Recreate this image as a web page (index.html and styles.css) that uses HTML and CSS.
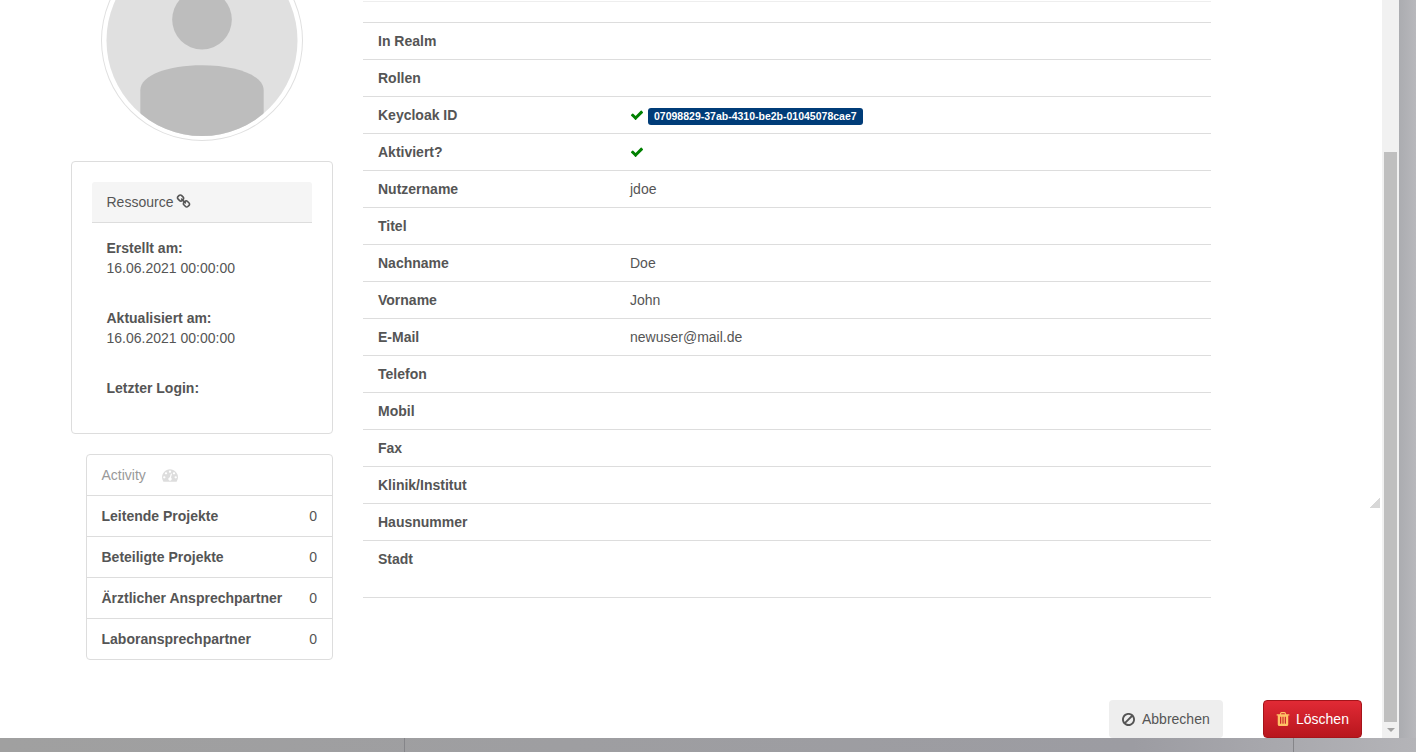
FILE: index.html
```html
<!DOCTYPE html>
<html lang="de">
<head>
    <meta charset="UTF-8">
    <title>Nutzer löschen</title>
    <link rel="stylesheet" href="styles.css">
</head>
<body>
    <div class="screen">
        <div class="screen-main">
            <div class="dialog">
                <div class="dialog-body">
                    <div class="side">
                        <div class="avatar">
                            <svg viewBox="0 0 192 192" width="192" height="191">
                                <defs>
                                    <clipPath id="avatarClip"><circle cx="96" cy="96" r="96"/></clipPath>
                                </defs>
                                <circle cx="96" cy="96" r="96" fill="#e0e0e0"/>
                                <circle cx="96" cy="75" r="30" fill="#bdbdbd"/>
                                <path clip-path="url(#avatarClip)" d="M34 200V146C34 131 62 121 96 121S158 131 158 146V200Z" fill="#bdbdbd"/>
                            </svg>
                        </div>

                        <div class="resource-card">
                            <div class="resource-head">
                                Ressource
                                <svg class="icon" viewBox="0 0 1792 1792" width="15" height="15"><path d="M1520 1216q0-40-28-68l-208-208q-28-28-68-28-42 0-72 32 3 3 19 18.500t21.500 21.500 15 19 13 25.500 3.500 27.500q0 40-28 68t-68 28q-15 0-27.500-3.500t-25.500-13-19-15-21.500-21.500-18.500-19q-33 31-33 73 0 40 28 68l206 207q27 27 68 27 40 0 68-26l147-146q28-28 28-67zm-703-705q0-40-28-68l-206-207q-28-28-68-28-39 0-68 27l-147 146q-28 28-28 67 0 40 28 68l208 208q27 27 68 27 42 0 72-31-3-3-19-18.500t-21.500-21.500-15-19-13-25.500-3.500-27.500q0-40 28-68t68-28q15 0 27.500 3.500t25.500 13 19 15 21.500 21.500 18.500 19q33-31 33-73zm895 705q0 120-85 203l-147 146q-83 83-203 83-121 0-204-85l-206-207q-83-83-83-203 0-123 88-209l-88-88q-86 88-208 88-120 0-204-84l-208-208q-84-84-84-204t85-203l147-146q83-83 203-83 121 0 204 85l206 207q83 83 83 203 0 123-88 209l88 88q86-88 208-88 120 0 204 84l208 208q84 84 84 204z"/></svg>
                            </div>
                            <div class="resource-field">
                                <strong>Erstellt am:</strong>
                                <span>16.06.2021 00:00:00</span>
                            </div>
                            <div class="resource-field">
                                <strong>Aktualisiert am:</strong>
                                <span>16.06.2021 00:00:00</span>
                            </div>
                            <div class="resource-field">
                                <strong>Letzter Login:</strong>
                            </div>
                        </div>

                        <div class="activity">
                            <div class="activity-head">
                                Activity
                                <svg class="activity-icon" viewBox="0 0 1792 1792" width="16" height="16"><path d="M384 1152q0-53-37.500-90.500t-90.500-37.500-90.500 37.500-37.500 90.500 37.500 90.500 90.500 37.500 90.500-37.500 37.500-90.500zm192-448q0-53-37.500-90.500t-90.500-37.500-90.500 37.500-37.500 90.500 37.500 90.500 90.500 37.500 90.500-37.500 37.500-90.500zm428 481l101-382q6-26-7.500-48.500t-38.500-29.500-48 6.500-30 39.500l-101 382q-60 5-107 43.500t-63 98.500q-20 77 20 146t117 89 146-20 89-117q16-60-6-117t-72-91zm660-33q0-53-37.500-90.500t-90.500-37.500-90.500 37.500-37.500 90.500 37.500 90.500 90.500 37.500 90.500-37.500 37.500-90.500zm-640-640q0-53-37.500-90.500t-90.500-37.500-90.500 37.500-37.500 90.500 37.500 90.500 90.500 37.500 90.500-37.500 37.500-90.500zm448 192q0-53-37.500-90.500t-90.500-37.500-90.500 37.500-37.500 90.500 37.500 90.500 90.500 37.500 90.500-37.500 37.500-90.500zm320 448q0 261-141 483-19 29-54 29h-1402q-35 0-54-29-141-221-141-483 0-182 71-348t191-286 286-191 348-71 348 71 286 191 191 286 71 348z"/></svg>
                            </div>
                            <div class="activity-row"><strong>Leitende Projekte</strong><span>0</span></div>
                            <div class="activity-row"><strong>Beteiligte Projekte</strong><span>0</span></div>
                            <div class="activity-row"><strong>Ärztlicher Ansprechpartner</strong><span>0</span></div>
                            <div class="activity-row"><strong>Laboransprechpartner</strong><span>0</span></div>
                        </div>
                    </div>

                    <div class="details">
                        <div class="detail-row detail-row-top"></div>
                        <div class="detail-row"><strong>In Realm</strong></div>
                        <div class="detail-row"><strong>Rollen</strong></div>
                        <div class="detail-row">
                            <strong>Keycloak ID</strong>
                            <span class="detail-value">
                                <svg class="check" viewBox="0 0 1792 1792" width="14" height="14"><path d="M1671 566q0 40-28 68l-724 724-136 136q-28 28-68 28t-68-28l-136-136-362-362q-28-28-28-68t28-68l136-136q28-28 68-28t68 28l294 295 656-657q28-28 68-28t68 28l136 136q28 28 28 68z"/></svg>
                                <span class="badge">07098829-37ab-4310-be2b-01045078cae7</span>
                            </span>
                        </div>
                        <div class="detail-row">
                            <strong>Aktiviert?</strong>
                            <span class="detail-value">
                                <svg class="check" viewBox="0 0 1792 1792" width="14" height="14"><path d="M1671 566q0 40-28 68l-724 724-136 136q-28 28-68 28t-68-28l-136-136-362-362q-28-28-28-68t28-68l136-136q28-28 68-28t68 28l294 295 656-657q28-28 68-28t68 28l136 136q28 28 28 68z"/></svg>
                            </span>
                        </div>
                        <div class="detail-row"><strong>Nutzername</strong><span class="detail-value">jdoe</span></div>
                        <div class="detail-row"><strong>Titel</strong></div>
                        <div class="detail-row"><strong>Nachname</strong><span class="detail-value">Doe</span></div>
                        <div class="detail-row"><strong>Vorname</strong><span class="detail-value">John</span></div>
                        <div class="detail-row"><strong>E-Mail</strong><span class="detail-value">newuser@mail.de</span></div>
                        <div class="detail-row"><strong>Telefon</strong></div>
                        <div class="detail-row"><strong>Mobil</strong></div>
                        <div class="detail-row"><strong>Fax</strong></div>
                        <div class="detail-row"><strong>Klinik/Institut</strong></div>
                        <div class="detail-row"><strong>Hausnummer</strong></div>
                        <div class="detail-row detail-row-last"><strong>Stadt</strong></div>
                    </div>
                </div>

                <div class="dialog-footer">
                    <button class="btn btn-cancel">
                        <svg viewBox="128 128 1536 1536" width="13" height="13"><path d="M1440 893q0-161-87-295l-754 753q137 89 297 89 111 0 211.500-43.500t173.500-116.500 116-174.500 43-212.500zm-999 299l755-754q-135-91-300-91-148 0-273 73t-198 199-73 274q0 162 89 299zm1223-299q0 157-61 300t-163.500 246-245 164-298.500 61-298.500-61-245-164-163.500-246-61-300 61-299.500 163.500-245.500 245-164 298.500-61 298.500 61 245 164 163.500 245.500 61 299.500z"/></svg>
                        Abbrechen
                    </button>
                    <button class="btn btn-delete">
                        <svg viewBox="128 128 1536 1536" width="14" height="14"><path d="M704 1376v-704q0-14-9-23t-23-9h-64q-14 0-23 9t-9 23v704q0 14 9 23t23 9h64q14 0 23-9t9-23zm256 0v-704q0-14-9-23t-23-9h-64q-14 0-23 9t-9 23v704q0 14 9 23t23 9h64q14 0 23-9t9-23zm256 0v-704q0-14-9-23t-23-9h-64q-14 0-23 9t-9 23v704q0 14 9 23t23 9h64q14 0 23-9t9-23zm-544-992h448l-48-117q-7-9-17-11h-317q-10 2-17 11zm928 32v64q0 14-9 23t-23 9h-96v948q0 83-47 143.500t-113 60.500h-832q-66 0-113-58.500t-47-141.500v-952h-96q-14 0-23-9t-9-23v-64q0-14 9-23t23-9h309l70-167q15-37 54-63t79-26h320q40 0 79 26t54 63l70 167h309q14 0 23 9t9 23z"/></svg>
                        Löschen
                    </button>
                </div>

                <div class="resize-handle"></div>
            </div>

            <div class="scrollbar">
                <div class="scrollbar-thumb"></div>
                <div class="scrollbar-arrow"></div>
            </div>
            <div class="backdrop-side"></div>
        </div>
        <div class="backdrop-bottom">
            <div class="backdrop-cell backdrop-cell-a"></div>
            <div class="backdrop-cell backdrop-cell-b"></div>
            <div class="backdrop-cell backdrop-cell-c"></div>
        </div>
    </div>
</body>
</html>
```

FILE: styles.css
```css
* {
    box-sizing: border-box;
}

html, body {
    margin: 0;
    height: 100%;
    overflow: hidden;
}

body {
    font-family: "Liberation Sans", Arial, sans-serif;
    font-size: 14px;
    line-height: 20px;
    color: #555;
    background-color: #a3a3a8;
}

.screen {
    display: flex;
    flex-direction: column;
    height: 752px;
}

.screen-main {
    display: flex;
    height: 738px;
}

.dialog {
    position: relative;
    width: 1382px;
    height: 738px;
    background-color: #fff;
    display: flex;
    flex-direction: column;
    overflow: hidden;
}

.dialog-body {
    display: flex;
    flex: 1;
    min-height: 0;
    padding-left: 71px;
}

.side {
    width: 262px;
    margin-top: -60px;
}

.avatar {
    width: 202px;
    height: 201px;
    margin-left: 30px;
    padding: 4px;
    border: 1px solid #e0e0e0;
    border-radius: 50%;
    background-color: #fff;
}

.avatar svg {
    display: block;
}

.resource-card {
    margin-top: 20px;
    padding: 20px 20px 0;
    height: 273px;
    border: 1px solid #ddd;
    border-radius: 4px;
}

.resource-head {
    height: 41px;
    padding: 10px 14.5px;
    background-color: #f5f5f5;
    border-bottom: 1px solid #ddd;
    border-radius: 3px 3px 0 0;
}

.icon {
    fill: #555;
    margin-left: -1px;
    vertical-align: -2px;
}

.resource-field {
    height: 70px;
    padding: 15px 14.5px;
}

.resource-field strong,
.resource-field span {
    display: block;
}

.activity {
    margin: 20px 0 0 15px;
    border: 1px solid #ddd;
    border-radius: 4px;
}

.activity-head {
    height: 41px;
    padding: 10px 15px 10px 14.5px;
    color: #999;
    border-bottom: 1px solid #ddd;
}

.activity-icon {
    fill: #ddd;
    margin-left: 12px;
    vertical-align: -3px;
}

.activity-row {
    display: flex;
    justify-content: space-between;
    height: 41px;
    padding: 10px 15px 10px 14.5px;
    border-bottom: 1px solid #ddd;
}

.activity-row:last-child {
    height: 40px;
    border-bottom: none;
}

.details {
    width: 848px;
    margin-left: 30px;
}

.detail-row {
    display: flex;
    height: 37px;
    padding: 8px 15px 8px 15px;
    border-top: 1px solid #ddd;
}

.detail-row strong {
    width: 252px;
    flex-shrink: 0;
}

.detail-row-top {
    height: 21px;
    margin-top: 1px;
    border-top-color: #eee;
}

.detail-row-last {
    height: 58px;
    border-bottom: 1px solid #ddd;
}

.detail-value {
    display: flex;
    align-items: center;
    height: 20px;
}

.check {
    fill: #008000;
}

.badge {
    margin: 3px 0 0 4px;
    padding: 0 6px;
    height: 17px;
    line-height: 17px;
    font-size: 10.5px;
    font-weight: bold;
    color: #fff;
    background-color: #003c78;
    border-radius: 3px;
}

.dialog-footer {
    display: flex;
    justify-content: flex-end;
    gap: 40px;
    padding-right: 20px;
}

.btn {
    display: flex;
    align-items: center;
    gap: 7px;
    height: 38px;
    padding: 0 12px;
    font-family: inherit;
    font-size: 14px;
    border-radius: 4px;
    border: 1px solid transparent;
}

.btn-cancel {
    width: 114px;
    color: #555;
    background-color: #eee;
}

.btn-cancel svg {
    fill: #555;
}

.btn-delete {
    width: 99px;
    gap: 6px;
    color: #fff;
    background: linear-gradient(#e12a35, #b8161d);
    border-color: #a5141a;
}

.btn-delete svg {
    fill: #ffc266;
}

.resize-handle {
    position: absolute;
    top: 498px;
    left: 1370px;
    width: 10px;
    height: 10px;
    background: linear-gradient(135deg, transparent 50%, #d8d8d8 50%);
}

.scrollbar {
    position: relative;
    width: 17px;
    background-color: #f1f1f1;
    padding-top: 152px;
}

.scrollbar-thumb {
    width: 13px;
    height: 570px;
    margin-left: 2px;
    background-color: #bfbfbf;
}

.scrollbar-arrow {
    width: 0;
    height: 0;
    margin: 6px 0 0 5px;
    border-left: 4px solid transparent;
    border-right: 4px solid transparent;
    border-top: 4px solid #a3a3a3;
}

.backdrop-side {
    flex: 1;
    background: linear-gradient(90deg, #abacb0, #b8b8bc);
}

.backdrop-bottom {
    display: flex;
    height: 14px;
    background: linear-gradient(90deg, #a0a0a0, #9c9ca2 80%, #b4b4b8);
}

.backdrop-cell {
    height: 100%;
}

.backdrop-cell-a {
    width: 405px;
    border-right: 1px solid #858589;
}

.backdrop-cell-b {
    width: 889px;
    border-right: 1px solid #858589;
}
```
